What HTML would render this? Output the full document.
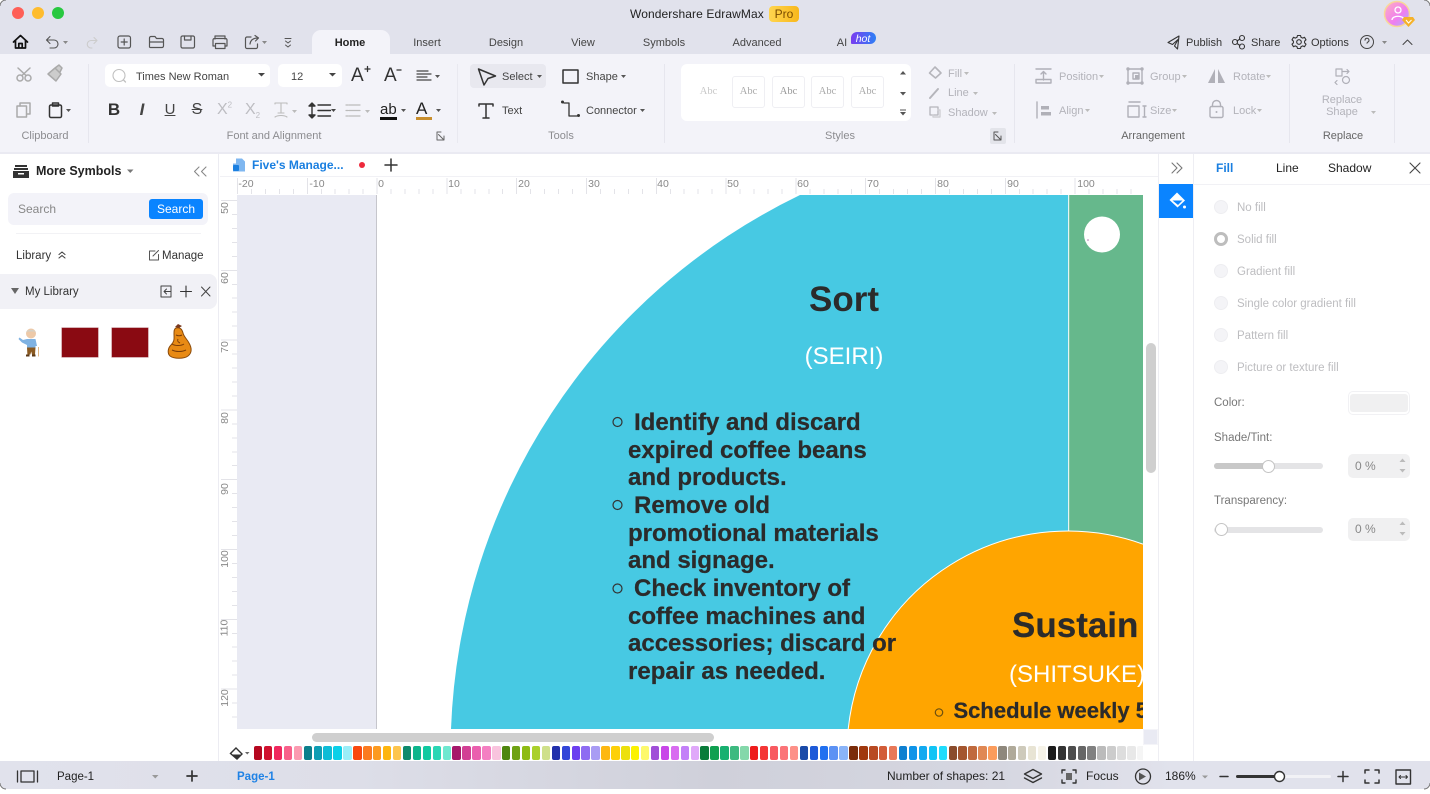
<!DOCTYPE html>
<html><head><meta charset="utf-8"><title>Wondershare EdrawMax</title>
<style>
html,body{margin:0;padding:0;width:1430px;height:794px;overflow:hidden;background:#fff}
body{position:relative;font-family:"Liberation Sans",Arial,sans-serif;color:#333}
#app{position:absolute;left:0;top:0;width:1430px;height:794px;overflow:hidden;filter:blur(.3px)}
#app div{position:absolute;box-sizing:border-box}
.t{white-space:nowrap;font-size:11px;line-height:14px;height:14px;margin-top:1px}
.c{transform:translateX(-50%)}
.g{color:#b3b3ba}
.l{color:#777;font-size:11.5px}
.r{color:#bdbdc0;font-size:11.5px}
.rad{width:14px;height:14px;border-radius:50%;background:#f4f4f7;border:1px solid #eeeef1;left:1214px}
.thumb{top:76px;width:33px;height:32px;border:1px solid #efeff3;border-radius:3px;font-family:"Liberation Serif",serif;font-size:10.5px;color:#aaa;text-align:center;line-height:30px}
.rt{color:#888;font-size:10.5px;line-height:12px;height:12px;white-space:nowrap}
.ca{color:#2b2b2b;font-weight:bold;font-size:24px;line-height:28px;height:28px;white-space:nowrap;-webkit-text-stroke:.25px #2b2b2b}
.sw{left:254px;top:746px;width:889px;height:14px;display:flex;overflow:hidden}
.sw i{display:block;flex:0 0 8.4px;margin-right:1.54px;height:14px;border-radius:2px}
svg{position:absolute;left:0;top:0}
</style></head><body><div id="app">

<!-- backgrounds -->
<div style="left:0;top:0;width:1430px;height:54px;background:#e1e2ec"></div>
<div style="left:0;top:54px;width:1430px;height:98px;background:#f3f3f9"></div>
<div style="left:0;top:152px;width:1430px;height:2px;background:#eaeaf2"></div>
<div style="left:312px;top:30px;width:78px;height:24px;background:#f3f3f9;border-radius:9px 9px 0 0"></div>
<div style="left:0;top:154px;width:219px;height:607px;background:#fff;border-right:1px solid #ececf2"></div>

<!-- ribbon dividers -->
<div style="left:88px;top:64px;width:1px;height:79px;background:#e6e6ee"></div>
<div style="left:457px;top:64px;width:1px;height:79px;background:#e9e9f0"></div>
<div style="left:664px;top:64px;width:1px;height:79px;background:#e6e6ee"></div>
<div style="left:1014px;top:64px;width:1px;height:79px;background:#e6e6ee"></div>
<div style="left:1289px;top:64px;width:1px;height:79px;background:#e6e6ee"></div>
<div style="left:1394px;top:64px;width:1px;height:79px;background:#e6e6ee"></div>

<!-- title -->
<div class="t" style="left:630px;top:7px;margin-top:0;font-size:12px;color:#222;letter-spacing:.1px">Wondershare EdrawMax</div>
<div style="left:769px;top:6px;width:30px;height:16px;border-radius:4px;background:linear-gradient(90deg,#ffd54f,#f8b81c)"></div>
<div class="t c" style="left:784px;top:7px;margin-top:0;font-size:12px;color:#7a4c00">Pro</div>

<!-- tabs -->
<div class="t c" style="left:350px;top:35px;font-weight:bold;color:#222">Home</div>
<div class="t c" style="left:427px;top:35px;color:#444">Insert</div>
<div class="t c" style="left:506px;top:35px;color:#444">Design</div>
<div class="t c" style="left:583px;top:35px;color:#444">View</div>
<div class="t c" style="left:664px;top:35px;color:#444">Symbols</div>
<div class="t c" style="left:757px;top:35px;color:#444">Advanced</div>
<div class="t c" style="left:842px;top:35px;color:#444">AI</div>
<div style="left:851px;top:32px;width:25px;height:12px;border-radius:6px 6px 6px 1px;background:linear-gradient(90deg,#7a3df0,#2d80f5)"></div>
<div class="t c" style="left:863px;top:31px;color:#fff;font-style:italic;font-size:10.5px">hot</div>
<div class="t" style="left:1186px;top:35px;color:#333">Publish</div>
<div class="t" style="left:1251px;top:35px;color:#333">Share</div>
<div class="t" style="left:1311px;top:35px;color:#333">Options</div>

<!-- font boxes -->
<div style="left:105px;top:64px;width:165px;height:23px;background:#fff;border-radius:5px"></div>
<div style="left:278px;top:64px;width:64px;height:23px;background:#fff;border-radius:5px"></div>
<div class="t" style="left:136px;top:69px;color:#444">Times New Roman</div>
<div class="t" style="left:291px;top:69px;color:#444">12</div>

<!-- tools -->
<div style="left:470px;top:64px;width:76px;height:24px;background:#e8e8ef;border-radius:4px"></div>
<div class="t" style="left:502px;top:69px;color:#444">Select</div>
<div class="t" style="left:586px;top:69px;color:#444">Shape</div>
<div class="t" style="left:502px;top:103px;color:#444">Text</div>
<div class="t" style="left:586px;top:103px;color:#444">Connector</div>

<!-- styles gallery -->
<div style="left:681px;top:64px;width:230px;height:57px;background:#fff;border-radius:6px"></div>
<div class="thumb" style="left:692px;border-color:#fff;color:#c8c8c8">Abc</div>
<div class="thumb" style="left:732px">Abc</div>
<div class="thumb" style="left:772px;color:#999">Abc</div>
<div class="thumb" style="left:811px">Abc</div>
<div class="thumb" style="left:851px">Abc</div>

<div class="t g" style="left:948px;top:66px">Fill</div>
<div class="t g" style="left:948px;top:85px">Line</div>
<div class="t g" style="left:948px;top:105px">Shadow</div>
<div style="left:990px;top:128px;width:16px;height:16px;background:#e3e4ea;border-radius:2px"></div>

<div class="t g" style="left:1059px;top:69px">Position</div>
<div class="t g" style="left:1150px;top:69px">Group</div>
<div class="t g" style="left:1233px;top:69px">Rotate</div>
<div class="t g" style="left:1059px;top:103px">Align</div>
<div class="t g" style="left:1150px;top:103px">Size</div>
<div class="t g" style="left:1233px;top:103px">Lock</div>
<div class="t g c" style="left:1342px;top:92px">Replace</div>
<div class="t g c" style="left:1342px;top:104px">Shape</div>

<div class="t c" style="left:45px;top:128px;color:#8c8c90">Clipboard</div>
<div class="t c" style="left:274px;top:128px;color:#8c8c90">Font and Alignment</div>
<div class="t c" style="left:561px;top:128px;color:#8c8c90">Tools</div>
<div class="t c" style="left:840px;top:128px;color:#8c8c90">Styles</div>
<div class="t c" style="left:1153px;top:128px;color:#666">Arrangement</div>
<div class="t c" style="left:1343px;top:128px;color:#666">Replace</div>

<!-- glyph-like formatting buttons -->
<div class="t c" style="left:114px;top:102px;margin-top:0;height:16px;line-height:16px;font-size:17px;font-weight:bold;color:#333">B</div>
<div class="t c" style="left:142px;top:102px;margin-top:0;height:16px;line-height:16px;font-size:17px;font-weight:bold;font-style:italic;color:#444">I</div>
<div class="t c" style="left:170px;top:102px;margin-top:0;height:16px;line-height:16px;font-size:15px;color:#444;text-decoration:underline">U</div>
<div class="t c" style="left:197px;top:102px;margin-top:0;height:16px;line-height:16px;font-size:16px;color:#444;text-decoration:line-through">S</div>
<div class="t" style="left:217px;top:102px;margin-top:0;height:16px;line-height:16px;font-size:16px;color:#bdbdc2">X<sup style="font-size:8px;line-height:0">2</sup></div>
<div class="t" style="left:245px;top:102px;margin-top:0;height:16px;line-height:16px;font-size:16px;color:#bdbdc2">X<sub style="font-size:8px;line-height:0">2</sub></div>
<div class="t" style="left:351px;top:67px;margin-top:0;height:18px;line-height:18px;font-size:19px;color:#333">A</div>
<div class="t" style="left:384px;top:67px;margin-top:0;height:18px;line-height:18px;font-size:19px;color:#333">A</div>
<div class="t" style="left:380px;top:102px;margin-top:0;font-size:15px;line-height:16px;height:16px;color:#222">ab</div>
<div class="t" style="left:416px;top:100px;margin-top:0;font-size:17px;line-height:18px;height:18px;color:#222">A</div>

<!-- left panel -->
<div class="t" style="left:36px;top:163px;font-size:12.5px;font-weight:bold;color:#222">More Symbols</div>
<div style="left:8px;top:193px;width:200px;height:32px;background:#f3f3f9;border-radius:6px"></div>
<div class="t" style="left:18px;top:202px;margin-top:0;font-size:12px;color:#888">Search</div>
<div style="left:149px;top:199px;width:54px;height:20px;background:#0a84ff;border-radius:3px"></div>
<div class="t c" style="left:176px;top:202px;margin-top:0;font-size:12px;color:#fff">Search</div>
<div style="left:16px;top:233px;width:185px;height:1px;background:#f2f2f5"></div>
<div class="t" style="left:16px;top:248px;font-size:11.5px;color:#333">Library</div>
<div class="t" style="left:162px;top:248px;font-size:11.5px;color:#333">Manage</div>
<div style="left:0;top:274px;width:217px;height:35px;background:#f1f1f6;border-radius:0 8px 8px 0"></div>
<div class="t" style="left:25px;top:284px;font-size:11.5px;color:#333">My Library</div>
<div style="left:62px;top:328px;width:36px;height:29px;background:#8a0a12;box-shadow:0 0 0 .5px #b06a70"></div>
<div style="left:112px;top:328px;width:36px;height:29px;background:#8a0a12;box-shadow:0 0 0 .5px #b06a70"></div>

<!-- tab bar + rulers -->
<div style="left:220px;top:154px;width:938px;height:23px;background:#fff;border-bottom:1px solid #f1f1f5"></div>
<div class="t" style="left:252px;top:158px;margin-top:0;font-size:12px;font-weight:bold;color:#1a7fe0">Five's Manage...</div>
<div style="left:220px;top:177px;width:923px;height:18px;background:#fff"></div>
<div style="left:237px;top:189px;width:906px;height:5px;background:repeating-linear-gradient(90deg,#e3e3e8 0,#e3e3e8 1px,transparent 1px,transparent 13.96px)"></div>
<div style="left:237px;top:178px;width:906px;height:16px;background:repeating-linear-gradient(90deg,#e3e3e8 0,#e3e3e8 1px,transparent 1px,transparent 69.8px)"></div>
<div style="left:232px;top:200px;width:5px;height:529px;background:repeating-linear-gradient(180deg,#e3e3e8 0,#e3e3e8 1px,transparent 1px,transparent 13.96px)"></div>
<div style="left:221px;top:200px;width:16px;height:529px;background:repeating-linear-gradient(180deg,#e3e3e8 0,#e3e3e8 1px,transparent 1px,transparent 69.8px)"></div>

<div class="rt c" style="left:246px;top:178px">-20</div>
<div class="rt c" style="left:317px;top:178px">-10</div>
<div class="rt c" style="left:381px;top:178px">0</div>
<div class="rt c" style="left:454px;top:178px">10</div>
<div class="rt c" style="left:524px;top:178px">20</div>
<div class="rt c" style="left:594px;top:178px">30</div>
<div class="rt c" style="left:663px;top:178px">40</div>
<div class="rt c" style="left:733px;top:178px">50</div>
<div class="rt c" style="left:803px;top:178px">60</div>
<div class="rt c" style="left:873px;top:178px">70</div>
<div class="rt c" style="left:943px;top:178px">80</div>
<div class="rt c" style="left:1013px;top:178px">90</div>
<div class="rt c" style="left:1086px;top:178px">100</div>

<div class="rt" style="left:219px;top:202px;transform:rotate(-90deg)">50</div>
<div class="rt" style="left:219px;top:272px;transform:rotate(-90deg)">60</div>
<div class="rt" style="left:219px;top:341px;transform:rotate(-90deg)">70</div>
<div class="rt" style="left:219px;top:412px;transform:rotate(-90deg)">80</div>
<div class="rt" style="left:219px;top:483px;transform:rotate(-90deg)">90</div>
<div class="rt" style="left:216px;top:553px;transform:rotate(-90deg)">100</div>
<div class="rt" style="left:216px;top:622px;transform:rotate(-90deg)">110</div>
<div class="rt" style="left:216px;top:692px;transform:rotate(-90deg)">120</div>

<!-- canvas -->
<div style="left:237px;top:195px;width:906px;height:534px;overflow:hidden;background:#fff">
  <div style="left:0;top:0;width:140px;height:534px;background:#e9eaf3;border-right:1.5px solid #c6c6cc"></div>
  <svg width="906" height="534" style="left:0;top:0">
    <rect x="831" y="0" width="75" height="534" fill="#66b88c"/>
    <path d="M831 0 V534 H214 A618 618 0 0 1 563 0 Z" fill="#47c9e3"/>
    <rect x="831" y="0" width="1.2" height="340" fill="#e6f5f2"/>
    <path d="M611.200 534 A221 221 0 0 1 906 349.100 V534 Z" fill="#ffa500"/>
    <path d="M611.200 534 A221 221 0 0 1 906 349.100" fill="none" stroke="#fff" stroke-width="1"/>
    <circle cx="865" cy="39.5" r="18" fill="#fff"/>
    <circle cx="851" cy="45" r=".8" fill="#b070b0"/>
  </svg>
  <div style="left:607px;top:85px;transform:translateX(-50%);color:#2b2b2b;font-weight:bold;font-size:35px;line-height:40px;height:40px;white-space:nowrap">Sort</div>
  <div style="left:607px;top:147px;transform:translateX(-50%);color:#fff;font-size:24px;line-height:30px;height:30px;white-space:nowrap">(SEIRI)</div>
  <div class="ca" style="left:397px;top:214px">Identify and discard</div>
  <div class="ca" style="left:391px;top:242px">expired coffee beans</div>
  <div class="ca" style="left:391px;top:269px">and products.</div>
  <div class="ca" style="left:397px;top:297px">Remove old</div>
  <div class="ca" style="left:391px;top:325px">promotional materials</div>
  <div class="ca" style="left:391px;top:352px">and signage.</div>
  <div class="ca" style="left:397px;top:380px">Check inventory of</div>
  <div class="ca" style="left:391px;top:408px">coffee machines and</div>
  <div class="ca" style="left:391px;top:435px">accessories; discard or</div>
  <div class="ca" style="left:391px;top:463px">repair as needed.</div>
  <svg width="906" height="534" style="left:0;top:0">
    <g fill="none" stroke="#333" stroke-width="1.2">
      <circle cx="380.500" cy="227" r="4.500"/><circle cx="380.500" cy="310" r="4.500"/><circle cx="380.500" cy="393.500" r="4.500"/>
    </g>
    <circle cx="702" cy="517.500" r="3.700" fill="none" stroke="#6b4f10" stroke-width="1.200"/>
  </svg>
  <div style="left:775px;top:411px;color:#2b2b2b;font-weight:bold;font-size:35px;line-height:40px;height:40px;white-space:nowrap;-webkit-text-stroke:.2px #2b2b2b">Sustain</div>
  <div style="left:772px;top:465px;color:#fff;font-size:24px;line-height:30px;height:30px;white-space:nowrap">(SHITSUKE)</div>
  <div class="ca" style="left:716.500px;top:502px;font-size:22px">Schedule weekly 5S</div>
</div>

<!-- scrollbars -->
<div style="left:220px;top:729px;width:938px;height:32px;background:#fff"></div>
<div style="left:312px;top:733px;width:402px;height:9px;background:#cfcfcf;border-radius:5px"></div>
<div style="left:1143px;top:729px;width:15px;height:16px;background:#e9eaf3;border:1px solid #f4f4f8"></div>
<div style="left:1146px;top:343px;width:10px;height:130px;background:#cfcfcf;border-radius:5px"></div>

<!-- palette -->
<div class="sw">
<i style="background:#b5071f"></i><i style="background:#d0112f"></i><i style="background:#f0285e"></i><i style="background:#f8608a"></i><i style="background:#fb9ab0"></i>
<i style="background:#0c7f8c"></i><i style="background:#0e9db3"></i><i style="background:#0ebcd6"></i><i style="background:#0cd0e8"></i><i style="background:#9aeef8"></i>
<i style="background:#f9480e"></i><i style="background:#fb7a20"></i><i style="background:#fc9a20"></i><i style="background:#fdb50f"></i><i style="background:#fdc54e"></i>
<i style="background:#0e8a6c"></i><i style="background:#0db58c"></i><i style="background:#10c9a0"></i><i style="background:#2ad6b4"></i><i style="background:#6fe8d0"></i>
<i style="background:#a6186a"></i><i style="background:#d23f94"></i><i style="background:#ea5fae"></i><i style="background:#f47fc2"></i><i style="background:#f9c4de"></i>
<i style="background:#4f860f"></i><i style="background:#6fa214"></i><i style="background:#8ebb14"></i><i style="background:#aad02c"></i><i style="background:#cfe08a"></i>
<i style="background:#2230ac"></i><i style="background:#3346d8"></i><i style="background:#6c3ff0"></i><i style="background:#8e6cf2"></i><i style="background:#a99cf4"></i>
<i style="background:#fdb811"></i><i style="background:#fdd008"></i><i style="background:#ece00c"></i><i style="background:#fbf200"></i><i style="background:#fdf96c"></i>
<i style="background:#a04fd8"></i><i style="background:#c846e8"></i><i style="background:#d86cf0"></i><i style="background:#c380f8"></i><i style="background:#e0a8fa"></i>
<i style="background:#0a7c3a"></i><i style="background:#10a050"></i><i style="background:#18b070"></i><i style="background:#3dba80"></i><i style="background:#84d8aa"></i>
<i style="background:#ee1c1c"></i><i style="background:#f43636"></i><i style="background:#f85a60"></i><i style="background:#fb7478"></i><i style="background:#fd9088"></i>
<i style="background:#1a4aa8"></i><i style="background:#1e5ad8"></i><i style="background:#2070f0"></i><i style="background:#5c92f4"></i><i style="background:#8ab4f8"></i>
<i style="background:#7a2c0a"></i><i style="background:#a0380e"></i><i style="background:#b84a22"></i><i style="background:#d25c38"></i><i style="background:#e87858"></i>
<i style="background:#0e80d0"></i><i style="background:#0f94e8"></i><i style="background:#12aaf0"></i><i style="background:#12c4f5"></i><i style="background:#20dcfc"></i>
<i style="background:#8a4c2c"></i><i style="background:#a4562f"></i><i style="background:#c06a3e"></i><i style="background:#e08854"></i><i style="background:#fb9c5c"></i>
<i style="background:#8e887c"></i><i style="background:#b0aa9a"></i><i style="background:#cecabb"></i><i style="background:#e8e4d4"></i><i style="background:#f6f3e8"></i>
<i style="background:#1c1c1c"></i><i style="background:#333"></i><i style="background:#4d4d4d"></i><i style="background:#666"></i><i style="background:#808080"></i>
<i style="background:#bbb"></i><i style="background:#ccc"></i><i style="background:#ddd"></i><i style="background:#e8e8e8"></i><i style="background:#f5f5f5"></i>
</div>

<!-- right column -->
<div style="left:1158px;top:154px;width:1px;height:607px;background:#eeeef3"></div>
<div style="left:1193px;top:154px;width:1px;height:607px;background:#eeeef3"></div>
<div style="left:1159px;top:184px;width:34px;height:34px;background:#0a84ff"></div>
<div style="left:1194px;top:184px;width:236px;height:1px;background:#f1f1f5"></div>
<div class="t" style="left:1216px;top:161px;margin-top:0;font-size:12px;font-weight:bold;color:#1a7fe0">Fill</div>
<div class="t" style="left:1276px;top:161px;margin-top:0;font-size:12px;color:#222">Line</div>
<div class="t" style="left:1328px;top:161px;margin-top:0;font-size:12px;color:#222">Shadow</div>

<div class="rad" style="top:200px"></div>
<div class="rad" style="top:232px;background:#fff;border:3.5px solid #bdbdbd"></div>
<div class="rad" style="top:264px"></div>
<div class="rad" style="top:296px"></div>
<div class="rad" style="top:328px"></div>
<div class="rad" style="top:360px"></div>
<div class="t r" style="left:1237px;top:200px">No fill</div>
<div class="t r" style="left:1237px;top:232px">Solid fill</div>
<div class="t r" style="left:1237px;top:264px">Gradient fill</div>
<div class="t r" style="left:1237px;top:296px">Single color gradient fill</div>
<div class="t r" style="left:1237px;top:328px">Pattern fill</div>
<div class="t r" style="left:1237px;top:360px">Picture or texture fill</div>

<div class="t l" style="left:1214px;top:395px">Color:</div>
<div style="left:1348px;top:391px;width:62px;height:24px;border:1px solid #f1f1f4;border-radius:5px"></div>
<div style="left:1350px;top:394px;width:58px;height:18px;background:#f0f0f1;border-radius:3px"></div>
<div class="t l" style="left:1214px;top:430px">Shade/Tint:</div>
<div style="left:1214px;top:463px;width:109px;height:6px;background:#e4e4e6;border-radius:3px"></div>
<div style="left:1214px;top:463px;width:54px;height:6px;background:#c8c8c8;border-radius:3px"></div>
<div style="left:1262px;top:459.500px;width:13px;height:13px;background:#fff;border:1.5px solid #c4c4c4;border-radius:50%"></div>
<div style="left:1348px;top:454px;width:62px;height:24px;background:#f0f0f1;border-radius:5px"></div>
<div class="t" style="left:1355px;top:459px;margin-top:0;font-size:12px;color:#888">0 %</div>
<div class="t l" style="left:1214px;top:493px">Transparency:</div>
<div style="left:1214px;top:527px;width:109px;height:5.500px;background:#e4e4e6;border-radius:3px"></div>
<div style="left:1214.500px;top:523px;width:13px;height:13px;background:#fff;border:1.5px solid #c4c4c4;border-radius:50%"></div>
<div style="left:1348px;top:518px;width:62px;height:23px;background:#f0f0f1;border-radius:5px"></div>
<div class="t" style="left:1355px;top:522px;margin-top:0;font-size:12px;color:#888">0 %</div>

<!-- status bar -->
<div style="left:0;top:761px;width:1430px;height:28px;background:linear-gradient(90deg,#e1e2ec 0,#dddee8 25%,#cfd0da 50%,#d6d7e1 70%,#e1e2ec 82%,#e1e2ec 100%)"></div>
<div class="t" style="left:57px;top:769px;font-size:11.500px;color:#222">Page-1</div>
<div class="t" style="left:237px;top:769px;font-size:11.500px;font-weight:bold;color:#1f82e5">Page-1</div>
<div class="t" style="left:887px;top:769px;margin-top:0;font-size:12px;color:#222">Number of shapes: 21</div>
<div class="t" style="left:1086px;top:769px;margin-top:0;font-size:12px;color:#222">Focus</div>
<div class="t" style="left:1165px;top:769px;margin-top:0;font-size:12px;color:#222">186%</div>

<!-- icons overlay -->
<svg width="1430" height="794" viewBox="0 0 1430 794">
<!-- traffic lights -->
<circle cx="18" cy="13" r="6" fill="#fe5f57"/><circle cx="38" cy="13" r="6" fill="#febc2e"/><circle cx="58" cy="13" r="6" fill="#28c840"/>
<!-- avatar -->
<defs><linearGradient id="av" x1="0" y1="0" x2="1" y2="1"><stop offset="0" stop-color="#ffb0c0"/><stop offset=".6" stop-color="#ee7ef0"/><stop offset="1" stop-color="#9fb8ff"/></linearGradient></defs>
<circle cx="1397" cy="14" r="12.500" fill="url(#av)" stroke="#f7d79a" stroke-width="1.5"/>
<circle cx="1398" cy="10" r="3" fill="none" stroke="#fff" stroke-width="1.3"/><path d="M1392 20c0-5 12-5 12 0" fill="none" stroke="#fff" stroke-width="1.3"/>
<path d="M1404 17h9l2 3-6.500 7-6.500-7z" fill="#f5b22a"/><path d="M1406 20l2.500 3 3-3" fill="none" stroke="#fff" stroke-width="1"/>

<g fill="none" stroke="#333" stroke-width="1.3" stroke-linecap="round" stroke-linejoin="round">
<!-- home -->
<path d="M13.500 42L20.500 35.500 27.500 42M15.500 40.500V48H25.500V40.500M18.800 48V43.500H22.200V48" stroke="#111" stroke-width="1.700"/>
<!-- undo -->
<path d="M50 36.500L46.500 40 50 43.500M46.800 40H54a4 4 0 0 1 0 8H50" stroke="#555" stroke-width="1.100"/>
<!-- redo -->
<path d="M94 37.500L97 40.500 94 43.500M96.500 40.500H91a3.700 3.700 0 0 0 0 7.500H92" stroke="#ccc" stroke-width="1.100"/>
<g stroke="#555" stroke-width="1.200">
<rect x="118" y="36" width="12.500" height="12" rx="2"/><path d="M124.200 39v6M121.200 42h6"/>
<path d="M149.500 47V38a1.500 1.500 0 0 1 1.500-1.500h4l1.500 2H162a1.500 1.500 0 0 1 1.500 1.500v6a1.500 1.500 0 0 1-1.500 1.500H151a1.500 1.500 0 0 1-1.500-.5zM149.500 42h14"/>
<rect x="181" y="36" width="13.500" height="12" rx="1.500"/><path d="M184.500 36v4h6.500v-4"/>
<path d="M215 39v-3h10v3M215 46h-2v-6a1.500 1.500 0 0 1 1.500-1.500h11a1.500 1.500 0 0 1 1.500 1.500v6h-2M215.500 43.500h9.500v5h-9.500z"/>
<path d="M251 37h-4a1.500 1.500 0 0 0-1.500 1.500V47a1.500 1.500 0 0 0 1.500 1.500h9a1.500 1.500 0 0 0 1.500-1.500v-3M250 44c.5-4 3-6 8-6M255 35.500l3.500 2.500-3 3"/>
<path d="M285 38.500h6M285.500 41l2.500 2 2.500-2M285.500 45l2.500 2 2.500-2" stroke-width="1"/>
</g>
<!-- publish -->
<path d="M1179 36l-11 6.500 4.500 2 5.500-5-3.500 6.500 3 3z" stroke="#333" stroke-width="1.100"/>
<!-- share -->
<g stroke="#333" stroke-width="1.100"><circle cx="1235" cy="42" r="2.500"/><circle cx="1242" cy="38" r="2.500"/><circle cx="1242" cy="46.500" r="2.500"/><path d="M1237 41l3-2M1237 43.500l3 2"/></g>
<!-- options -->
<g stroke="#333" stroke-width="1.100"><circle cx="1299" cy="42" r="2.300"/><path d="M1297.500 35.500h3l.5 1.800 1.700.8 1.800-.8 1.500 2.500-1.400 1.300v1.800l1.400 1.300-1.500 2.500-1.800-.8-1.700.8-.5 1.800h-3l-.5-1.800-1.700-.8-1.800.8-1.500-2.500 1.400-1.300v-1.800l-1.400-1.300 1.500-2.500 1.800.8 1.700-.8z"/></g>
<circle cx="1367" cy="42" r="6.500" stroke="#444" stroke-width="1"/>
<path d="M1365 40.200a2 2 0 1 1 2.900 1.800c-.6.300-.9.700-.9 1.300" stroke="#444" stroke-width="1"/>
<path d="M1403 44.500l4.500-4.500 4.500 4.500" stroke="#444" stroke-width="1"/>

<!-- clipboard group -->
<g stroke="#aaa" stroke-width="1.500">
<circle cx="20" cy="78" r="3"/><circle cx="28" cy="78" r="3"/><path d="M22 75.500L30 68M26 75.500L18 68"/>
<path d="M48 74l7-6 6 6-5 7zM55 68l4-3 3 3-2 4"  fill="#ccc"/>
<rect x="17" y="106" width="9.500" height="11"/><path d="M20 106v-3h10v11h-3"/>
</g>
<g stroke="#333" stroke-width="1.500"><rect x="49.500" y="105" width="12" height="12.500" rx="1.500"/><path d="M52.500 105v-2h6v3h-6z"/></g>

<!-- font area -->
<circle cx="119" cy="75.500" r="6" stroke="#c0c0c0" stroke-width="1.100"/><path d="M123.500 80l2 2" stroke="#c0c0c0"/>
<path d="M365 69h5M367.500 66.500v5" stroke="#333" stroke-width="1.300"/>
<path d="M397 70h4" stroke="#333" stroke-width="1.300"/>
<path d="M417 71h11M417 74h14M417 77h10M417 80h14" stroke="#444" stroke-width="1.200"/>

<path d="M275 104v-1h12v1M281 103v10M278 113h6M275 117c3-2 9-2 12 0" stroke="#bbb" stroke-width="1.100"/>
<path d="M312 103l-3 3h6zM312 118l-3-3h6zM312 106v9M318 105h12.500M318 110.500h12.500M318 116h12.500" stroke="#333" stroke-width="1.400" fill="#333"/>
<path d="M346 105h14M346 110.500h14M346 116h14" stroke="#bbb" stroke-width="1.200" stroke-dasharray="2 1 11"/>

<!-- corner dialog launchers -->
<path d="M441 132h-4v8h4M438.500 134.500l5.500 5.500M444 136v4h-4" stroke="#666" stroke-width="1"/>
<path d="M998 132h-4v8h4M995.500 134.500l5.500 5.500M1001 136v4h-4" stroke="#555" stroke-width="1"/>

<!-- tools icons -->
<path d="M478.500 69l17 7-7.500 2.500-4 6.500z" stroke="#333" stroke-width="1.500"/>
<rect x="563" y="70" width="15" height="13" stroke="#333" stroke-width="1.500"/>
<path d="M479 106v-2h14v2M486 104v14M483 118h6" stroke="#333" stroke-width="1.500"/>
<path d="M564 103h5v13h8" stroke="#333" stroke-width="1.300"/>
<circle cx="562.500" cy="102" r="1.500" fill="#333" stroke="none"/><circle cx="578.500" cy="115.500" r="1.500" fill="#333" stroke="none"/>

<!-- fill line shadow -->
<path d="M935 67l6 6-5.500 5-6-5z" stroke="#b5b5bb" stroke-width="1.600"/>
<path d="M930 98l8-9" stroke="#b5b5bb" stroke-width="2"/>
<rect x="930" y="107" width="8" height="8" stroke="#b5b5bb" stroke-width="1.300"/><path d="M938 110h2v7h-7v-2" stroke="#cfcfd4" stroke-width="1.400"/>

<!-- arrange icons -->
<g stroke="#b0b0b8" stroke-width="1.400">
<path d="M1036 69h15M1043.500 80v-8M1041 74l2.500-2.500 2.500 2.500M1036 79.500h15v3.500h-15z"/>
<rect x="1128" y="69" width="14" height="14" rx="1"/><rect x="1133" y="73" width="6" height="6"/>
<path d="M1037 102v16"/>
<path d="M1129 102h11M1128 106h11v11h-11zM1143 106h3M1144.500 106v11M1143 117h3"/>
<rect x="1210" y="106.500" width="13" height="11" rx="1.500"/><path d="M1212.500 106.500v-2a4 4 0 0 1 8 0v2"/>
<path d="M1336 69h6v7h-6zM1347 69.500l2 2-2 2M1342 71.500h6M1337 80.500l-2 2 2 2" stroke-width="1.200"/><circle cx="1346" cy="80" r="3.500" stroke-width="1.200"/>
</g>
<g fill="#b0b0b8" stroke="none">
<circle cx="1128" cy="69" r="1.700"/><circle cx="1142" cy="69" r="1.700"/><circle cx="1128" cy="83" r="1.700"/><circle cx="1142" cy="83" r="1.700"/>
<rect x="1041" y="106" width="8" height="3.500"/><rect x="1041" y="112" width="10" height="3.500"/>
<path d="M1215 69v14h-7zM1218 69v14h7z"/><rect x="1135" y="75" width="4" height="4"/>
<circle cx="1216.500" cy="112" r="1"/>
</g>

<!-- left panel icons -->
<path d="M199 167l-4.500 4.500 4.500 4.500M206 167l-4.500 4.500 4.500 4.500" stroke="#888" stroke-width="1.100"/>
<path d="M59 258l3-2.500 3 2.500M59 254.500l3-2.500 3 2.500" stroke="#444" stroke-width="1.100"/>
<path d="M155 251h-5.500v9h9v-5.500M153 256l5.500-5.500" stroke="#555" stroke-width="1"/>
<path d="M161 286h10v11h-10zM171 291.500h-7M166.500 289l-2.500 2.500 2.500 2.500" stroke="#444" stroke-width="1"/>
<path d="M186 286v11M180.500 291.500h11" stroke="#333" stroke-width="1.100"/>
<path d="M201.500 287l8.500 9M210 287l-8.500 9" stroke="#444" stroke-width="1"/>

<!-- tab / canvas top -->
<path d="M391 159v12M385 165h12" stroke="#333" stroke-width="1.500"/>
<path d="M1172 163l5 5-5 5M1177 163l5 5-5 5" stroke="#777" stroke-width="1.100"/>
<path d="M1410 163l10 10M1420 163l-10 10" stroke="#444" stroke-width="1.100"/>

<!-- status -->
<rect x="21" y="771" width="13" height="11" stroke="#333" stroke-width="1.300"/><path d="M17.500 771v11M37.500 771v11" stroke="#333" stroke-width="1.300"/>
<path d="M192 771v10M187 776h10" stroke="#333" stroke-width="1.700"/>
<path d="M1033 769.500l8.500 4.500-8.500 4.500-8.500-4.500zM1024.500 778l8.500 4.500 8.500-4.500" stroke="#333" stroke-width="1.400"/>
<path d="M1062 773v-3h3M1073 770h3v3M1076 780v3h-3M1065 783h-3v-3" stroke="#333" stroke-width="1.400"/>
<circle cx="1143" cy="776.500" r="7.500" stroke="#333" stroke-width="1.300"/>
<path d="M1220 776.500h8" stroke="#333" stroke-width="1.500"/>
<path d="M1343 771.500v10M1338 776.500h10" stroke="#333" stroke-width="1.500"/>
<path d="M1365 773v-3h4M1375 770h4v3M1379 780v3h-4M1369 783h-4v-3" stroke="#333" stroke-width="1.500"/>
<rect x="1396" y="770" width="14.500" height="14" stroke="#333" stroke-width="1.400"/>
<path d="M1399 777h8.500M1400.500 775.500l-1.500 1.500 1.500 1.500M1406 775.500l1.500 1.500-1.500 1.500" stroke="#333" stroke-width="1"/>
</g>

<!-- filled icons -->
<g fill="#888" stroke="none">
<path d="M63 41h5l-2.500 3z"/><path d="M262 41h5l-2.500 3z"/>
<path d="M1382 41h5l-2.500 3z"/>
<path d="M66 109h5l-2.500 3z" fill="#555"/>
<path d="M258 73h7l-3.500 3.500z" fill="#444"/><path d="M329 73h7l-3.500 3.500z" fill="#444"/>
<path d="M435 75h5l-2.500 3z" fill="#555"/>
<path d="M331 109h5l-2.500 3z" fill="#444"/>
<path d="M292 110h5l-2.500 3z" fill="#bbb"/><path d="M365 110h5l-2.500 3z" fill="#bbb"/>
<path d="M401 109h5l-2.500 3z" fill="#555"/><path d="M436 109h5l-2.500 3z" fill="#555"/>
<path d="M537 75h5l-2.500 3z" fill="#555"/><path d="M621 75h5l-2.500 3z" fill="#555"/><path d="M640 109h5l-2.500 3z" fill="#555"/>
<path d="M900 74.500h6l-3-3.500z" fill="#555"/><path d="M900 92h6l-3 3.500z" fill="#555"/><path d="M900 112h6l-3 3.500z" fill="#555"/><rect x="900" y="109.500" width="6" height="1" fill="#555"/>
<g fill="#bbb"><path d="M964 72h5l-2.500 3z"/><path d="M973 92h5l-2.500 3z"/><path d="M992 112h5l-2.500 3z"/>
<path d="M1099 75h5l-2.500 3z"/><path d="M1182 75h5l-2.500 3z"/><path d="M1266 75h5l-2.500 3z"/><path d="M1085 109h5l-2.500 3z"/><path d="M1172 109h5l-2.500 3z"/><path d="M1257 109h5l-2.500 3z"/><path d="M1371 111h5l-2.500 3z"/></g>
<path d="M127 169.500h6.500l-3.250 3.500z" fill="#777"/>
<path d="M11 288h8l-4 6z" fill="#666"/>
<path d="M152 775h6.500l-3.250 3.500z" fill="#999"/>
<path d="M1202 775.500h6l-3 3z" fill="#999"/>
<path d="M1399.500 462l3-3.500 3 3.500zM1399.500 469l3 3.500 3-3.500z" fill="#bbb"/>
<path d="M1399.500 525l3-3.500 3 3.500zM1399.500 532l3 3.500 3-3.500z" fill="#bbb"/>
<path d="M1139 772.500l7 4-7 4z" fill="#555"/>
<rect x="1066" y="773" width="6" height="7" fill="#666"/>
<!-- ab underline, A underline -->
<rect x="380" y="117" width="17" height="3" fill="#111"/>
<rect x="416" y="117" width="16" height="3" fill="#c88e2d"/>
</g>
<!-- more-symbols tray -->
<g fill="#333"><path d="M15 165h12v2H15z"/><path d="M14 168h14v2H14z"/><path d="M13 171h16v7H13zm5 2v1.500h6V173z"/></g>
<!-- doc icon -->
<path d="M236 158.500h6l3 3v10h-12v-8h3z" fill="#7fb7f0"/><rect x="233" y="165" width="6" height="6" rx="1" fill="#1a7fe0"/>
<!-- fill bucket (blue button) -->
<path d="M1177 192.500l8 8-7.500 7-8-7.500z" fill="#fff"/><path d="M1172.500 200.500h10l-4.500 4.500z" fill="#0a84ff"/>
<circle cx="1184.500" cy="207" r="1.500" fill="#fff"/>
<!-- palette bucket -->
<path d="M236 748l6 6-5 5-6.500-5.500z" fill="none" stroke="#333" stroke-width="1.400"/><path d="M231 754.500h10l-4.500 4.500z" fill="#333"/>
<path d="M245 752h4.500l-2.250 2.500z" fill="#666"/>
<!-- slider -->
<rect x="1236" y="775" width="95" height="3" rx="1.500" fill="#f2f2f6"/>
<rect x="1236" y="775" width="43" height="3" rx="1.500" fill="#333"/>
<circle cx="1279.500" cy="776.500" r="5" fill="#fff" stroke="#333" stroke-width="1.400"/>
<!-- old man -->
<g>
<circle cx="31" cy="333.500" r="5" fill="#edc9a8"/><path d="M26 332.500c1-3.500 9-3.500 10 0l-2-1h-6z" fill="#d5d1c6"/>
<path d="M27 339h8.500l1.500 7h-1.500v2h-8.500v-3l-5-2.500-3.500-3.500 1-1.500 3.500 2.500z" fill="#7fb2e2"/>
<path d="M27 347.500h8.500l-.5 7h-3l-.8-3-.8 3h-3z" fill="#8a5a22"/>
<path d="M26 354.500h3.500v2H26zM32 354.500h3.500v2H32z" fill="#5c3a18"/>
<path d="M38.500 347v9.500" stroke="#e0b888" stroke-width="1"/>
</g>
<!-- pear -->
<path d="M176 328c4-1 6 1 7 5 1 4 4 6 6 10 3 5 3 10-1 13-4 3-14 3-18 0-3-3-2-8 1-11 4-4 3-7 3-11 0-3 0-5 2-6z" fill="#e88a14" stroke="#8a4a0a" stroke-width="1"/>
<path d="M172 344c3 2 9 2 12 0M172 350c4 2 10 2 14 0M176 335c2 1 4 1 6 0M178 339c-1 2 0 3 2 4" stroke="#7a3c08" stroke-width="1" fill="none"/>
<path d="M175 327l3-3 4 2-3 2z" fill="#7a3a20"/>
<!-- window corners -->
<g fill="#fff"><path d="M0 0H6A6 6 0 0 0 0 6Z"/><path d="M1430 0H1424A6 6 0 0 1 1430 6Z"/><path d="M0 789V783A6 6 0 0 0 6 789Z"/><path d="M1430 789V783A6 6 0 0 1 1424 789Z"/></g>
<g fill="none" stroke="#777" stroke-width="1"><path d="M6 0A6 6 0 0 0 0 6"/><path d="M1424 0A6 6 0 0 1 1430 6"/><path d="M0 783A6 6 0 0 0 6 789"/><path d="M1430 783A6 6 0 0 1 1424 789"/></g>
</svg>

<div style="left:359px;top:162px;width:6px;height:6px;background:#ee2a3c;border-radius:50%"></div>
</div></body></html>
